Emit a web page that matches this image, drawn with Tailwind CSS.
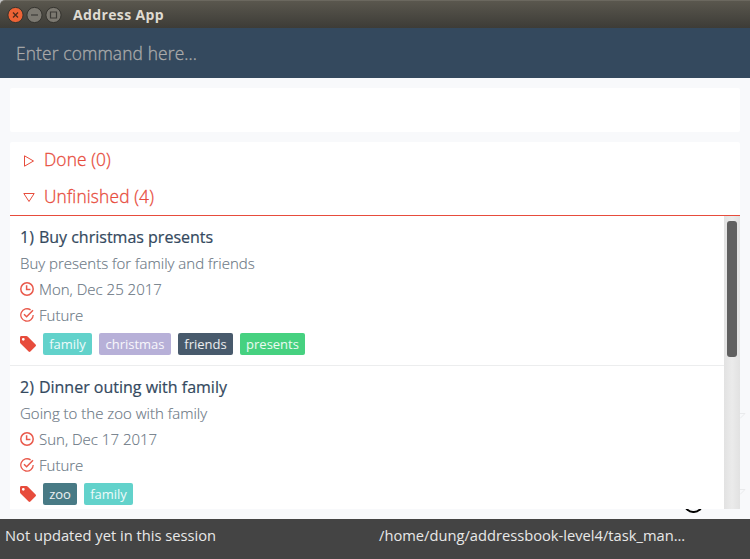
<!DOCTYPE html>
<html lang="en">
<head>
<meta charset="utf-8">
<title>Address App</title>
<script src="https://cdn.jsdelivr.net/npm/@tailwindcss/browser@4"></script>
</head>
<body class="w-[750px] h-[559px] overflow-hidden bg-[#f8f9fb] font-['Open_Sans',sans-serif]">
<svg class="hidden">
  <symbol id="clock" viewBox="0 0 14 14"><g fill="none" stroke="#e9594b" stroke-width="1.5"><circle cx="7" cy="7" r="6.2"/><path d="M6.6 3.2V7.4H10.4"/></g></symbol>
  <symbol id="check" viewBox="0 0 14 14"><g fill="none" stroke="#e9594b" stroke-width="1.3"><path d="M10.6 1.9A6.2 6.2 0 1 0 13.2 7"/><path d="M4 6.2L6.6 8.8L13 2.2" stroke-width="1.5"/></g></symbol>
  <symbol id="tag" viewBox="0 0 16 16"><path fill="#e74c3c" fill-rule="evenodd" d="M0 1.4Q0 0 1.4 0H6.4Q7.2 0 7.9.7L15.6 8.4Q16.4 9.3 15.6 10.2L10.4 15.5Q9.5 16.3 8.6 15.5L.8 7.8Q0 7 0 6.2ZM3.3 1.9A1.4 1.4 0 1 0 3.3 4.7A1.4 1.4 0 1 0 3.3 1.9Z"/></symbol>
</svg>
<div class="flex flex-col w-[750px] h-[559px]">
  <header class="h-7 shrink-0 bg-[#c4c4c4]">
    <div class="h-7 flex items-center pl-[7px] rounded-tl-[5px] bg-linear-to-b from-[#5a574e] to-[#3d3c37] border-t border-[#6b685f]">
      <svg class="w-[56px] h-[18px]" viewBox="0 0 56 18" fill="none">
        <circle cx="8.5" cy="9" r="7.6" fill="#ee6335" stroke="#34332e"/>
        <path d="M6 6.5l5 5M11 6.5l-5 5" stroke="#4f2c1c" stroke-width="1.3"/>
        <circle cx="27.5" cy="9" r="7.6" fill="#7c7971" stroke="#34332e"/>
        <path d="M24 9h7" stroke="#3c3b37" stroke-width="1.2"/>
        <circle cx="46.5" cy="9" r="7.6" fill="#7c7971" stroke="#34332e"/>
        <path d="M43.5 6h6v6h-6z" stroke="#3c3b37" stroke-width="1.2"/>
      </svg>
      <h1 class="ml-[10px] text-[14px] leading-[18px] tracking-[0.36px] font-bold text-[#dfdbd2] whitespace-nowrap">Address App</h1>
    </div>
  </header>
  <div class="h-[50px] shrink-0 bg-[#34495e] flex items-center pl-4 pt-px text-[17.33px] tracking-[0.15px] font-light text-[#aaaaaa] [-webkit-text-stroke:0.3px_#aaaaaa]">Enter command here...</div>
  <main class="h-[441px] shrink-0 px-[10px] pt-[10px] relative">
    <div class="absolute left-[684px] top-[417px] w-[20px] h-[19px] overflow-hidden"><div class="w-[19px] h-[18px] rounded-b-[9px] border-2 border-t-0 border-black"></div></div>
    <svg class="absolute left-[740px] top-[335px] w-[6px] h-[85px]" viewBox="0 0 6 85" fill="none" stroke="#e9eaec"><path d="M0 .5H5L0 5.5M0 76.500H5L0 81.500"/></svg>
    <div class="h-11 bg-white rounded-[2px]"></div>
    <section class="mt-[10px] h-[367px] bg-white rounded-t-[2px] relative flex flex-col">
      <div class="h-[37px] shrink-0 flex items-center pl-[13px] gap-[9px] text-[17.33px] tracking-[0.12px] font-light text-[#e74c3c] [-webkit-text-stroke:0.3px_#e74c3c]">
        <svg class="w-3 h-3" viewBox="0 0 12 12" fill="none" stroke="#e74c3c"><path d="M1.5 .8V11.200L10.500 6Z"/></svg><span class="-mt-px">Done (0)</span>
      </div>
      <div class="h-[37px] shrink-0 flex items-center pl-[13px] gap-[9px] text-[17.33px] tracking-[0.15px] font-light text-[#e74c3c] [-webkit-text-stroke:0.3px_#e74c3c] border-b border-[#e74c3c]">
        <svg class="w-3 h-3" viewBox="0 0 12 12" fill="none" stroke="#e74c3c"><path d="M.8 2.500H11.200L6 10.500Z"/></svg><span>Unfinished (4)</span>
      </div>
      <div class="h-[293px] flex">
        <div class="w-[714px] text-[15px] leading-[26px] font-light text-[#6b7784] [-webkit-text-stroke:0.15px_#6b7784]">
          <article class="h-[150px] pl-[10px] pt-[8px] border-b border-[#ecedee]">
            <h2 class="flex gap-[5px] text-[16px] font-normal text-[#34495e] [-webkit-text-stroke:0.2px_#34495e]"><span>1)</span><span>Buy christmas presents</span></h2>
            <p>Buy presents for family and friends</p>
            <p class="flex items-center gap-[5px]"><svg class="w-[14px] h-[14px]"><use href="#clock"/></svg><span>Mon, Dec 25 2017</span></p>
            <p class="flex items-center gap-[5px]"><svg class="w-[14px] h-[14px]"><use href="#check"/></svg><span>Future</span></p>
            <div class="flex items-center gap-[7px] mt-[5px] h-[22px] text-[13px] leading-[22px] font-normal text-white/90 [-webkit-text-stroke:0px]">
              <svg class="w-4 h-4"><use href="#tag"/></svg>
              <span class="w-[49px] text-center rounded-[2px] bg-[#62d2cb]">family</span>
              <span class="w-[72px] text-center rounded-[2px] bg-[#b7b0d8]">christmas</span>
              <span class="w-[55px] text-center rounded-[2px] bg-[#485a6c]">friends</span>
              <span class="w-[65px] text-center rounded-[2px] bg-[#46d180]">presents</span>
            </div>
          </article>
          <article class="h-[143px] pl-[10px] pt-[8px]">
            <h2 class="flex gap-[5px] text-[16px] font-normal text-[#34495e] [-webkit-text-stroke:0.2px_#34495e]"><span>2)</span><span>Dinner outing with family</span></h2>
            <p>Going to the zoo with family</p>
            <p class="flex items-center gap-[5px]"><svg class="w-[14px] h-[14px]"><use href="#clock"/></svg><span>Sun, Dec 17 2017</span></p>
            <p class="flex items-center gap-[5px]"><svg class="w-[14px] h-[14px]"><use href="#check"/></svg><span>Future</span></p>
            <div class="flex items-center gap-[7px] mt-[5px] h-[22px] text-[13px] leading-[22px] font-normal text-white/90 [-webkit-text-stroke:0px]">
              <svg class="w-4 h-4"><use href="#tag"/></svg>
              <span class="w-[34px] text-center rounded-[2px] bg-[#487a85]">zoo</span>
              <span class="w-[49px] text-center rounded-[2px] bg-[#62d2cb]">family</span>
            </div>
          </article>
        </div>
        <div class="w-4 pt-[5px] pl-[3px] bg-linear-to-r from-[#e2e2e2] via-[#ebebeb] to-[#e2e2e2]"><div class="w-[10px] h-[136px] rounded-[3px] bg-[#606060]"></div></div>
      </div>
    </section>
  </main>
  <footer class="h-10 shrink-0 bg-[#444444] flex items-start pt-[5px] pl-[5px] text-[14.7px] leading-[22px] text-[#e8e8e8] whitespace-nowrap">
    <span class="w-[374px]">Not updated yet in this session</span>
    <span>/home/dung/addressbook-level4/task_man...</span>
  </footer>
</div>
</body>
</html>
